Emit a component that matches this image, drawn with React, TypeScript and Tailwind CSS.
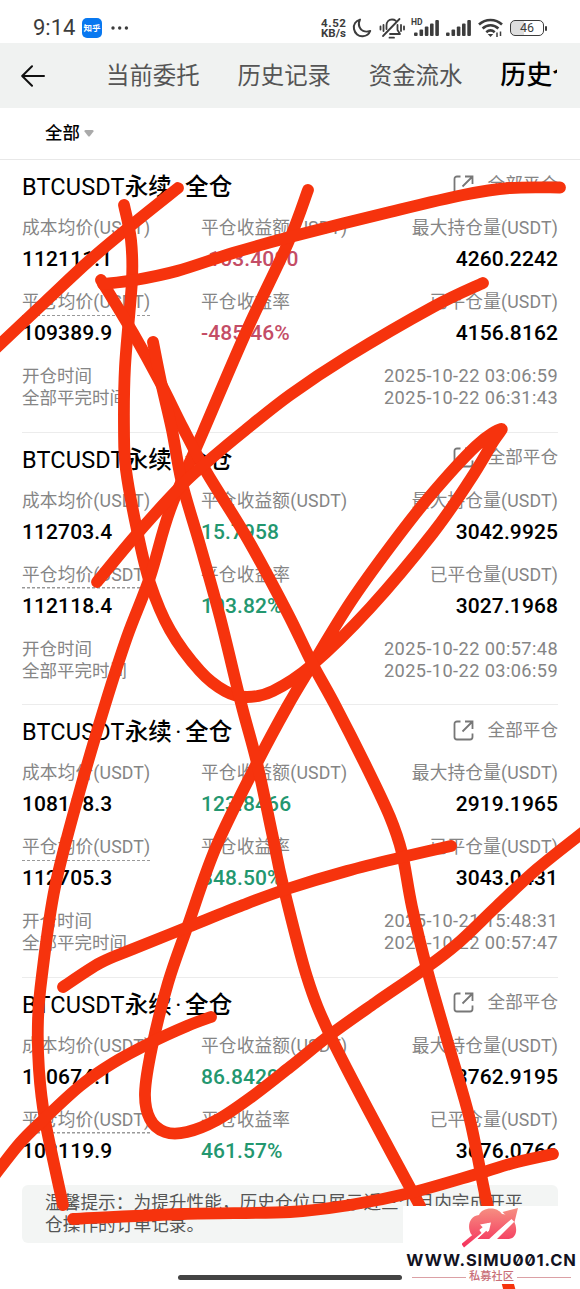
import { ReactNode } from 'react';

type Position = {
  cost: string;
  pnl: string;
  maxSize: string;
  closePrice: string;
  roi: string;
  closed: string;
  up: boolean;
  opened?: string;
  finished?: string;
};

const positions: Position[] = [
  { cost: '112111.1', pnl: '-103.4080', maxSize: '4260.2242', closePrice: '109389.9', roi: '-485.46%', closed: '4156.8162', up: false, opened: '2025-10-22 03:06:59', finished: '2025-10-22 06:31:43' },
  { cost: '112703.4', pnl: '15.7958', maxSize: '3042.9925', closePrice: '112118.4', roi: '103.82%', closed: '3027.1968', up: true, opened: '2025-10-22 00:57:48', finished: '2025-10-22 03:06:59' },
  { cost: '108118.3', pnl: '123.8466', maxSize: '2919.1965', closePrice: '112705.3', roi: '848.50%', closed: '3043.0431', up: true, opened: '2025-10-21 15:48:31', finished: '2025-10-22 00:57:47' },
  { cost: '110674.1', pnl: '86.8429', maxSize: '3762.9195', closePrice: '108119.9', roi: '461.57%', closed: '3676.0766', up: true },
];

type Point = [number, number];

// hand-drawn marker strokes, as the points the finger passed through
const strokes: Point[][] = [
  [[178, 188], [133, 224], [90, 260], [45, 302], [-8, 352]],
  [
    [124, 205], [131, 240], [132, 280], [125, 367], [124, 430], [126, 470], [137, 530], [150, 583], [170, 630], [200, 671], [225, 691], [247, 697], [273, 691], [312, 665],
    [370, 608], [433, 533], [470, 480], [493, 442], [501, 429], [476, 446], [430, 496], [390, 547], [350, 603], [312, 665], [287, 707], [257, 763], [216, 847], [188, 925], [168, 983],
    [152, 1047], [145, 1093], [150, 1119], [165, 1132], [187, 1132], [217, 1120], [250, 1098], [290, 1067], [330, 1035], [375, 1003], [423, 970], [457, 944], [497, 906], [537, 869], [586, 830],
  ],
  [[308, 190], [288, 243], [247, 330], [203, 432], [170, 510], [150, 577], [127, 637], [105, 705], [80, 790], [55, 887], [42, 975], [38, 1020], [39, 1070], [45, 1120], [63, 1205]],
  [[101, 280], [133, 333], [160, 382], [183, 428], [207, 473], [247, 538], [287, 612], [312, 663], [335, 705], [367, 768], [390, 817], [402, 853], [412, 907], [428, 973], [450, 1050], [470, 1120], [487, 1203], [510, 1292]],
  [[103, 284], [135, 280], [177, 271], [233, 253], [290, 237], [390, 212], [463, 195], [510, 188], [560, 187.5]],
  [[153, 342], [161, 382], [172, 430], [182, 483], [200, 545], [220, 617], [241, 703], [257, 763], [272, 833], [283, 885], [307, 977], [330, 1035], [370, 1113], [420, 1206]],
  [[483, 283], [433, 307], [347, 357], [290, 395], [243, 432], [213, 457], [182, 485], [137, 534], [97, 582]],
  [[63, 987], [100, 963], [133, 949], [188, 927], [243, 905], [287, 889], [347, 871], [403, 857], [451, 846]],
  [[211, 1017], [187, 1026], [152, 1042], [113, 1063], [80, 1086], [43, 1120], [20, 1143], [-6, 1176]],
  [[73, 1219], [183, 1214], [290, 1212], [350, 1205], [410, 1193], [477, 1174], [517, 1162], [553, 1154]],
];

function smooth(pts: Point[]) {
  let d = `M${pts[0][0]} ${pts[0][1]}`;
  for (let i = 0; i < pts.length - 1; i++) {
    const a = pts[i - 1] ?? pts[i];
    const b = pts[i];
    const c = pts[i + 1];
    const e = pts[i + 2] ?? c;
    d += `C${b[0] + (c[0] - a[0]) / 6} ${b[1] + (c[1] - a[1]) / 6} ${c[0] - (e[0] - b[0]) / 6} ${c[1] - (e[1] - b[1]) / 6} ${c[0]} ${c[1]}`;
  }
  return d;
}

function Signal() {
  return (
    <svg width="27" height="18" viewBox="0 0 27 18" fill="#3c3c3c">
      <rect x="1" y="13.5" width="3.6" height="3.5" rx="1" />
      <rect x="6.5" y="10.5" width="3.6" height="6.5" rx="1" />
      <rect x="11.8" y="7.5" width="3.6" height="9.5" rx="1" />
      <rect x="17" y="4.5" width="3.6" height="12.5" rx="1" />
      <rect x="22.3" y="1" width="3.6" height="16" rx="1" />
    </svg>
  );
}

function StatusBar() {
  return (
    <header className="flex h-[43px] items-center pl-[33px] pr-[33px] pt-[13px] text-[#3c3c3c]">
      <span className="w-[49px] text-[22px] leading-none">9:14</span>
      <span className="flex h-5 w-5 items-center justify-center rounded-[5px] bg-[#0878f0] text-[8.5px] font-bold text-white">知乎</span>
      <svg className="ml-2" width="20" height="6" viewBox="0 0 20 6" fill="#3c3c3c">
        <circle cx="3" cy="3" r="1.7" />
        <circle cx="9.7" cy="3" r="1.7" />
        <circle cx="16.4" cy="3" r="1.7" />
      </svg>
      <div className="ml-auto flex items-center">
        <div className="w-[31px] text-[11.5px] font-bold leading-[10.5px]">
          <div className="tracking-[0.6px]">4.52</div>
          <div>KB/s</div>
        </div>
        <svg width="20" height="20" viewBox="0 0 20 20" fill="none" stroke="#3c3c3c" strokeWidth="2" strokeLinejoin="round">
          <path d="M8 1.600C3.800 3 1.200 6.600 2 11c.8 4.500 4.500 7.600 8.900 7.200 3.400-.2 6.200-2.300 7.300-5.200-5.600 1.600-9.600-.6-10.900-4.300C6.500 6.200 6.900 3.500 8 1.600z" />
        </svg>
        <svg className="ml-[7px]" width="26" height="22" viewBox="0 0 26 22" fill="none" stroke="#3c3c3c" strokeWidth="1.800" strokeLinecap="round" strokeLinejoin="round">
          <path d="M7.500 12V8.500C7.500 5 9.800 2.500 13 2.500c1.500 0 2.700.4 3.600 1.200M18.500 8v5l2.500 4H11M4 19 20.500 2M10.500 20.700h4.500M4.500 8v6M1.500 9.500v3M22 8v6M25 9.500v3" />
        </svg>
        <div className="relative ml-[8px]">
          <span className="absolute -left-0.5 -top-px text-[8.5px] font-bold leading-[8px]">HD</span>
          <Signal />
        </div>
        <div className="ml-[5px]">
          <Signal />
        </div>
        <svg className="ml-[6px]" width="25" height="20" viewBox="0 0 25 20" fill="none" stroke="#3c3c3c" strokeWidth="2.600">
          <path d="M1 6.500C7.500.4 17.500.4 24 6.500M4.600 10.500c4.600-4.300 11.200-4.300 15.800 0M8.300 14.200c2.600-2.300 5.800-2.300 8.400 0" />
          <path d="M9.700 16h5.600l-2.800 3z" fill="#3c3c3c" stroke="none" />
          <path d="M19 14.500v4.500M22.500 13.500v4.500" strokeWidth="1.500" />
        </svg>
        <div className="ml-[7px] flex h-4 w-[34px] items-center justify-center rounded-[5px] border-[1.5px] border-[#3c3c3c] bg-[linear-gradient(90deg,#dedede_40%,#fff_40%)] text-[12.5px] leading-none">46</div>
        <div className="ml-px h-[5px] w-[2px] rounded-sm bg-[#3c3c3c]" />
      </div>
    </header>
  );
}

function Tabs() {
  return (
    <nav className="flex h-[65px] items-center bg-[#f0f2f1] pl-[21px] text-[23.4px] text-[#555]">
      <svg width="25" height="22" viewBox="0 0 25 22" fill="none" stroke="#111" strokeWidth="2" strokeLinecap="round" strokeLinejoin="round">
        <path d="M23 11H1.500M11 1.200 1.200 11 11 20.800" />
      </svg>
      <span className="ml-[60px] w-[131.4px] pt-[2px]">当前委托</span>
      <span className="w-[131.4px] pt-[2px]">历史记录</span>
      <span className="w-[131.4px] pt-[2px]">资金流水</span>
      <span className="w-[57px] overflow-hidden whitespace-nowrap text-[26px] font-[450] text-black">历史仓位</span>
    </nav>
  );
}

function Cell({ label, value, color = 'text-black', dashed, right }: { label: string; value: string; color?: string; dashed?: boolean; right?: boolean }) {
  return (
    <div className={right ? 'text-right' : ''}>
      <div className="h-7 text-[17.7px] leading-7 tracking-[0.15px] text-[#858585]">
        <span className={dashed ? 'inline-block h-7 bg-[repeating-linear-gradient(90deg,#999_0_3px,transparent_3px_5px)] bg-[length:100%_1.5px] bg-bottom bg-no-repeat' : 'inline-block'}>
          {label}
        </span>
      </div>
      <div className={`h-[34px] text-[21px] font-[480] leading-[34px] tracking-[0.1px] ${color}`}>{value}</div>
    </div>
  );
}

function Row({ children }: { children: ReactNode }) {
  return <div className="grid grid-cols-[179px_168px_1fr] whitespace-nowrap">{children}</div>;
}

function PositionCard({ item, last }: { item: Position; last: boolean }) {
  const tone = item.up ? 'text-[#23976f]' : 'text-[#c44d66]';
  return (
    <article className={last ? 'h-[207px] pt-px' : 'h-[272.67px] border-b border-[#ececec] pt-px'}>
      <div className="flex h-[53px] items-center justify-between">
        <h3 className="flex text-[23.5px] font-[450] tracking-[0.15px] text-black">
          <span>BTCUSDT永续</span>
          <span className="w-[13px] text-center">·</span>
          <span>全仓</span>
        </h3>
        <div className="flex items-center gap-[14px] pb-[5px] text-[17.6px] leading-none text-[#858585]">
          <svg width="21" height="21" viewBox="0 0 21 21" fill="none" stroke="#777" strokeWidth="1.800">
            <path d="M7.500 1.500H4A2.500 2.500 0 0 0 1.500 4v13A2.500 2.500 0 0 0 4 19.500h13a2.500 2.500 0 0 0 2.500-2.500v-3.500M12 1.500h7.500V9M19.500 1.500 9.500 11.500" />
          </svg>
          全部平仓
        </div>
      </div>
      <Row>
        <Cell label="成本均价(USDT)" value={item.cost} />
        <Cell label="平仓收益额(USDT)" value={item.pnl} color={tone} />
        <Cell label="最大持仓量(USDT)" value={item.maxSize} right />
      </Row>
      <div className="h-3" />
      <Row>
        <Cell label="平仓均价(USDT)" value={item.closePrice} dashed />
        <Cell label="平仓收益率" value={item.roi} color={tone} />
        <Cell label="已平仓量(USDT)" value={item.closed} right />
      </Row>
      {item.opened && (
        <div className="mt-[15px] text-[17.5px] leading-[22px] text-[#858585]">
          <div className="flex justify-between">
            <span>开仓时间</span>
            <span className="text-[18.2px] tracking-[0.4px]">{item.opened}</span>
          </div>
          <div className="flex justify-between">
            <span>全部平完时间</span>
            <span className="text-[18.2px] tracking-[0.4px]">{item.finished}</span>
          </div>
        </div>
      )}
    </article>
  );
}

function Watermark() {
  return (
    <div className="absolute left-[403px] top-[1206px] flex h-[78px] w-[177px] flex-col items-center bg-white">
      <svg className="mt-px" width="60" height="42" viewBox="0 0 60 42">
        <defs>
          <linearGradient id="cloud" gradientUnits="userSpaceOnUse" x1="0" y1="0" x2="0" y2="40">
            <stop offset="0" stopColor="#f69283" />
            <stop offset="1" stopColor="#f5315c" />
          </linearGradient>
        </defs>
        <path d="M9 27C5 20 7 9 17 8 20 0 35-1 40 7L47 8C55 14 58 30 47 32H14z" fill="url(#cloud)" />
        <path d="M2 40 11 28 26 16 25 23 14 33z" fill="#fff" />
        <path d="M18 17.500 29 15.500 26.500 26 24 23.500 13 34H5L21 20.500z" fill="#fff" />
        <path d="M25 34 51 10 54 13 33 34z" fill="#fff" />
        <path d="M-.5 37 17 22.500 19.500 26 2 40.500z" fill="url(#cloud)" />
        <path d="M20 30 44 8.500 40.500 5 56 1 52.500 15 49.500 12 28 30z" fill="url(#cloud)" />
      </svg>
      <div className="mt-[1px] whitespace-nowrap font-['Inter',sans-serif] text-[16.5px] font-bold leading-5 tracking-[0.9px] text-[#12121f] [font-feature-settings:'zero']">WWW.SIMU001.CN</div>
      <div className="flex items-center gap-[3px] text-[11.2px] font-medium leading-[14px] text-[#c96f78]">
        <span className="h-px w-[54px] bg-[#dba0a5]" />
        私募社区
        <span className="h-px w-[54px] bg-[#dba0a5]" />
      </div>
    </div>
  );
}

export default function App() {
  return (
    <div className="relative flex h-[1289px] w-[580px] flex-col overflow-hidden bg-white font-['Roboto','Noto_Sans_CJK_SC',sans-serif]">
      <StatusBar />
      <Tabs />
      <div className="flex h-[52px] items-center gap-1 border-b border-[#e8e8e8] pl-[45px] text-[17.4px] font-[450] text-black">
        全部
        <svg width="10" height="7" viewBox="0 0 10 7" fill="#aaa">
          <path d="M1.500 0h7Q10 0 9.500 1.500L6 6Q5 7 4 6L.5 1.500Q0 0 1.500 0z" />
        </svg>
      </div>
      <main className="px-[22px]">
        {positions.map((item, i) => (
          <PositionCard key={item.cost} item={item} last={i === positions.length - 1} />
        ))}
        <div className="h-[58px] rounded-md bg-[#f3f5f4] px-[23px] pt-[7px] text-[17.7px] leading-[22px] text-[#555]">
          <div className="whitespace-nowrap">温馨提示：为提升性能，历史仓位只展示近三个月内完成开平</div>
          <div>仓操作的订单记录。</div>
        </div>
      </main>
      <div className="mb-[9px] ml-[178px] mt-auto h-[5px] w-[224px] rounded-full bg-[#444]" />
      <svg className="pointer-events-none absolute inset-0" width="580" height="1289" viewBox="0 0 580 1289" fill="none" stroke="#f6330d" strokeWidth="11.800" strokeLinecap="round" strokeLinejoin="round">
        {strokes.map((pts, i) => (
          <path key={i} d={smooth(pts)} />
        ))}
      </svg>
      <Watermark />
    </div>
  );
}
